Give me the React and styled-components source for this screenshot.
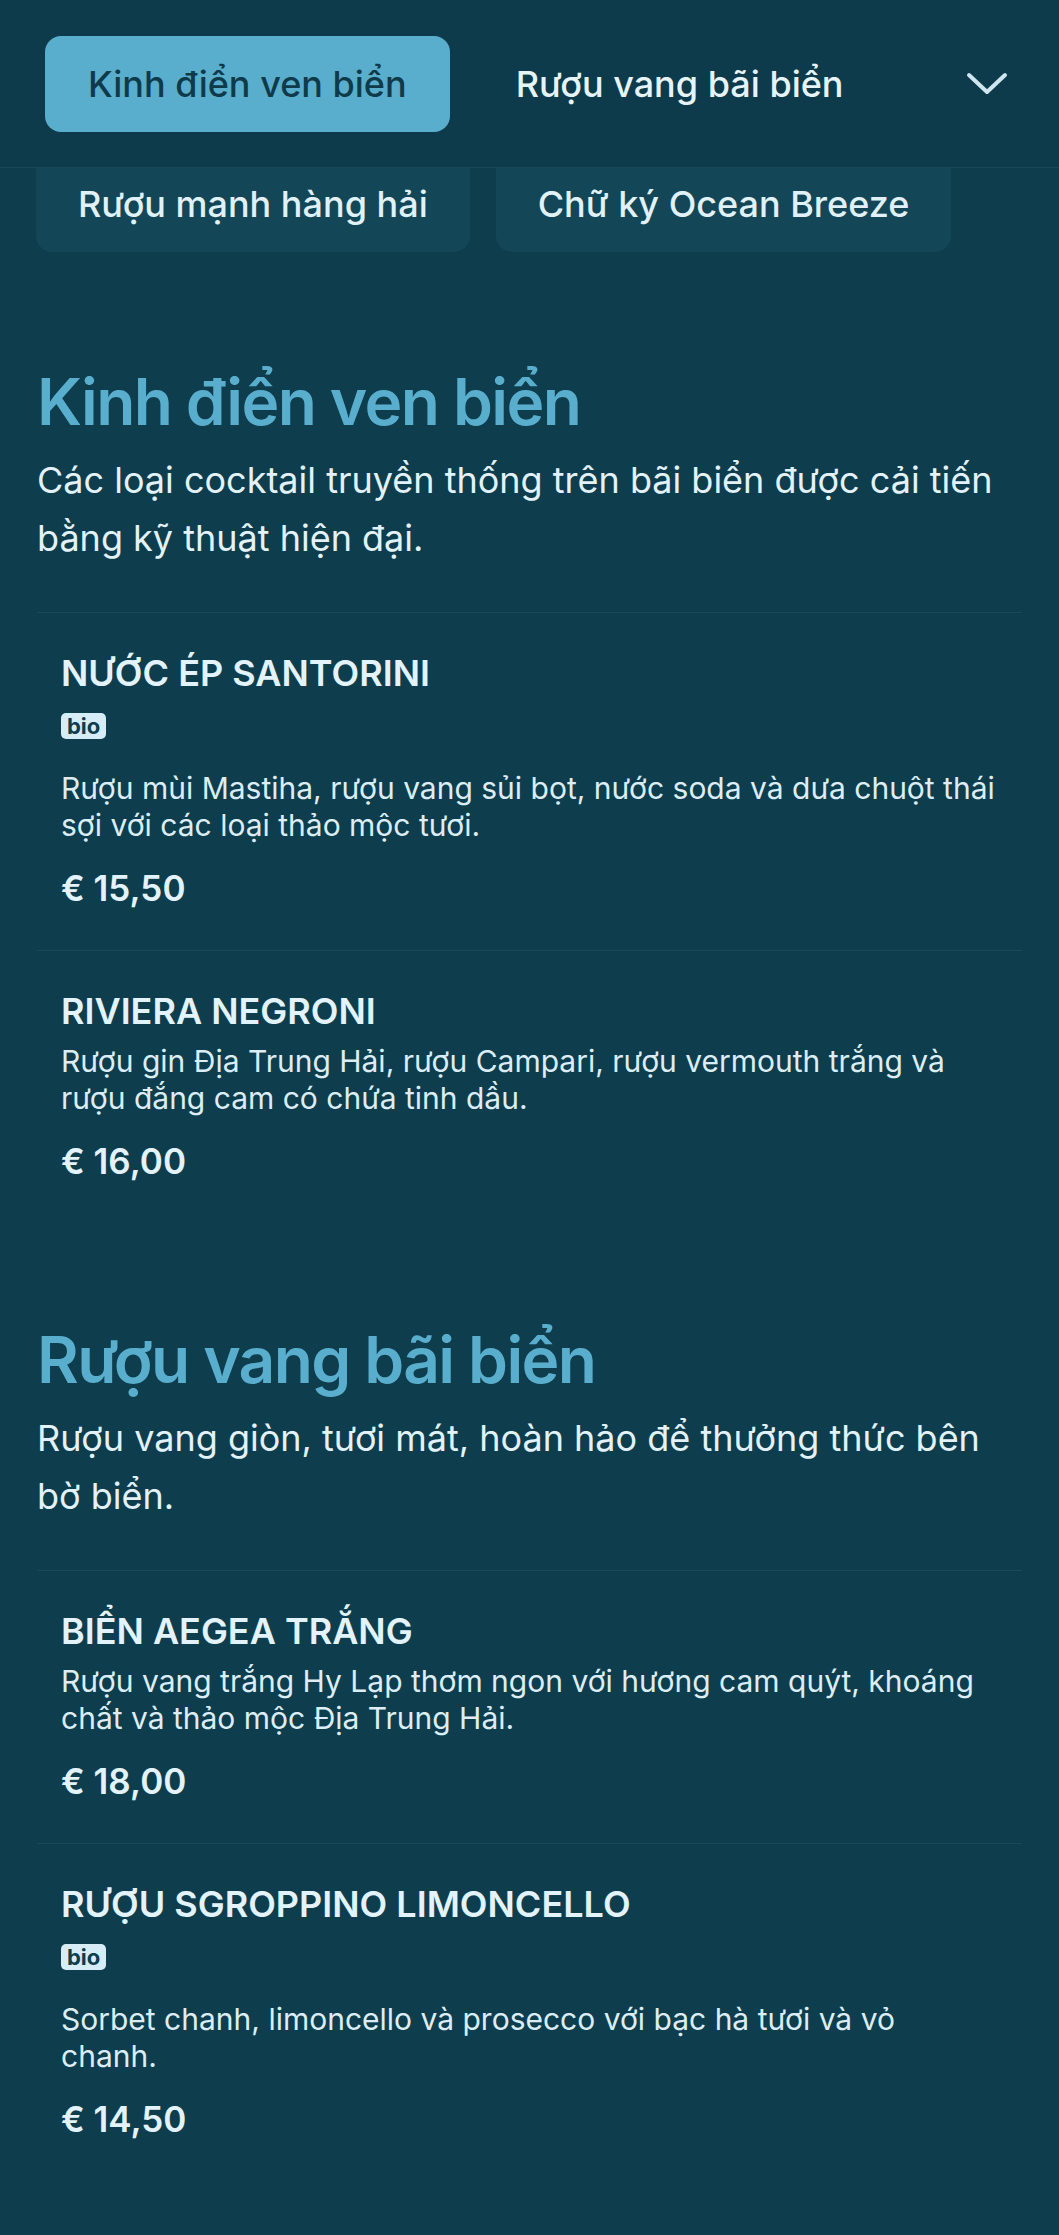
import React from "react";
import styled, { createGlobalStyle } from "styled-components";

const GlobalStyle = createGlobalStyle`
    * {
        box-sizing: border-box;
    }

    body {
        margin: 0;
        background: #0e3d4e;
        font-family: Inter, "Noto Sans", "Liberation Sans", sans-serif;
        color: #e3f2f9;
    }
`;

const menu = [
    {
        id: "classics",
        title: "Kinh điển ven biển",
        excerpt: "Các loại cocktail truyền thống trên bãi biển được cải tiến bằng kỹ thuật hiện đại.",
        items: [
            {
                name: "NƯỚC ÉP SANTORINI",
                tags: ["bio"],
                excerpt: "Rượu mùi Mastiha, rượu vang sủi bọt, nước soda và dưa chuột thái sợi với các loại thảo mộc tươi.",
                price: "€ 15,50",
            },
            {
                name: "RIVIERA NEGRONI",
                tags: [],
                excerpt: "Rượu gin Địa Trung Hải, rượu Campari, rượu vermouth trắng và rượu đắng cam có chứa tinh dầu.",
                price: "€ 16,00",
            },
        ],
    },
    {
        id: "wines",
        title: "Rượu vang bãi biển",
        excerpt: "Rượu vang giòn, tươi mát, hoàn hảo để thưởng thức bên bờ biển.",
        items: [
            {
                name: "BIỂN AEGEA TRẮNG",
                tags: [],
                excerpt: "Rượu vang trắng Hy Lạp thơm ngon với hương cam quýt, khoáng chất và thảo mộc Địa Trung Hải.",
                price: "€ 18,00",
            },
            {
                name: "RƯỢU SGROPPINO LIMONCELLO",
                tags: ["bio"],
                excerpt: "Sorbet chanh, limoncello và prosecco với bạc hà tươi và vỏ chanh.",
                price: "€ 14,50",
            },
        ],
    },
];

const ChevronDown = () => (
    <svg width="42" height="24" viewBox="0 0 42 24" fill="none">
        <path
            d="M3 3 L21 20 L39 3"
            stroke="#cfe6f1"
            strokeWidth="4"
            strokeLinecap="round"
            strokeLinejoin="round"
        />
    </svg>
);

const MenuItem = ({ item }) => (
    <Item>
        <ItemName>{item.name}</ItemName>
        {item.tags.length > 0 && (
            <TagRow>
                {item.tags.map((tag) => (
                    <Tag key={tag}>{tag}</Tag>
                ))}
            </TagRow>
        )}
        <ItemExcerpt>{item.excerpt}</ItemExcerpt>
        <Price>{item.price}</Price>
    </Item>
);

const App = () => {
    return (
        <>
            <GlobalStyle />
            <Header>
                <TabRow>
                    <Tab $active>Kinh điển ven biển</Tab>
                    <Tab>Rượu vang bãi biển</Tab>
                </TabRow>
                <Toggle aria-label="Mở danh mục">
                    <ChevronDown />
                </Toggle>
            </Header>
            <ChipRow>
                <Chip>Rượu mạnh hàng hải</Chip>
                <Chip>Chữ ký Ocean Breeze</Chip>
            </ChipRow>
            <Main>
                {menu.map((section) => (
                    <Section key={section.id}>
                        <SectionTitle>{section.title}</SectionTitle>
                        <SectionExcerpt>{section.excerpt}</SectionExcerpt>
                        <ItemList>
                            {section.items.map((item) => (
                                <MenuItem key={item.name} item={item} />
                            ))}
                        </ItemList>
                    </Section>
                ))}
            </Main>
        </>
    );
};

const Header = styled.header`
    display: flex;
    align-items: center;
    justify-content: space-between;
    height: 168px;
    padding: 0 51px 0 45px;
    background: #0d3b4b;
    border-bottom: 1px solid rgba(255, 255, 255, 0.05);
`;

const TabRow = styled.nav`
    display: flex;
    gap: 23px;
`;

const Tab = styled.button`
    display: flex;
    align-items: center;
    height: 96px;
    padding: 0 43px;
    border: none;
    border-radius: 16px;
    background: ${(props) => (props.$active ? "#5aaecd" : "transparent")};
    color: ${(props) => (props.$active ? "#0f3a4a" : "#e6f4fa")};
    font-family: inherit;
    font-size: 36px;
    font-weight: 500;
`;

const Toggle = styled.button`
    display: flex;
    padding: 0;
    border: none;
    background: none;
`;

const ChipRow = styled.div`
    display: flex;
    gap: 26px;
    padding: 0 36px;
    margin-bottom: 13px;
`;

const Chip = styled.span`
    display: flex;
    align-items: center;
    height: 84px;
    padding: 0 42px 13px;
    border-radius: 0 0 16px 16px;
    background: #134657;
    color: #e0f1f8;
    font-size: 36px;
    font-weight: 500;
`;

const Main = styled.main`
    padding: 0 37px 56px;
`;

const Section = styled.section`
    padding-top: 98px;
`;

const SectionTitle = styled.h2`
    margin: 0;
    color: #5aaecd;
    font-size: 64px;
    font-weight: 600;
    line-height: 77px;
    letter-spacing: -0.025em;
`;

const SectionExcerpt = styled.p`
    margin: 11px 0 45px;
    color: #e3f2f9;
    font-size: 36px;
    line-height: 58px;
`;

const ItemList = styled.div`
    display: flex;
    flex-direction: column;
`;

const Item = styled.article`
    display: flex;
    flex-direction: column;
    align-items: flex-start;
    padding: 38px 25px 40px 24px;
    border-top: 1px solid rgba(255, 255, 255, 0.06);
`;

const ItemName = styled.h3`
    margin: 0;
    color: #e3f3fb;
    font-size: 36px;
    font-weight: 600;
    line-height: 44px;
`;

const TagRow = styled.div`
    display: flex;
    gap: 8px;
    margin: 18px 0 21px;
`;

const Tag = styled.span`
    display: inline-flex;
    align-items: center;
    height: 26px;
    padding: 0 6px;
    border-radius: 5px;
    background: #d6ecf7;
    color: #0e3d4e;
    font-size: 22px;
    font-weight: 700;
`;

const ItemExcerpt = styled.p`
    margin: 10px 0 0;
    color: #dcedf5;
    font-size: 30px;
    line-height: 37px;
`;

const Price = styled.div`
    margin-top: 22px;
    color: #e3f3fb;
    font-size: 35px;
    font-weight: 600;
    line-height: 44px;
`;

export default App;
